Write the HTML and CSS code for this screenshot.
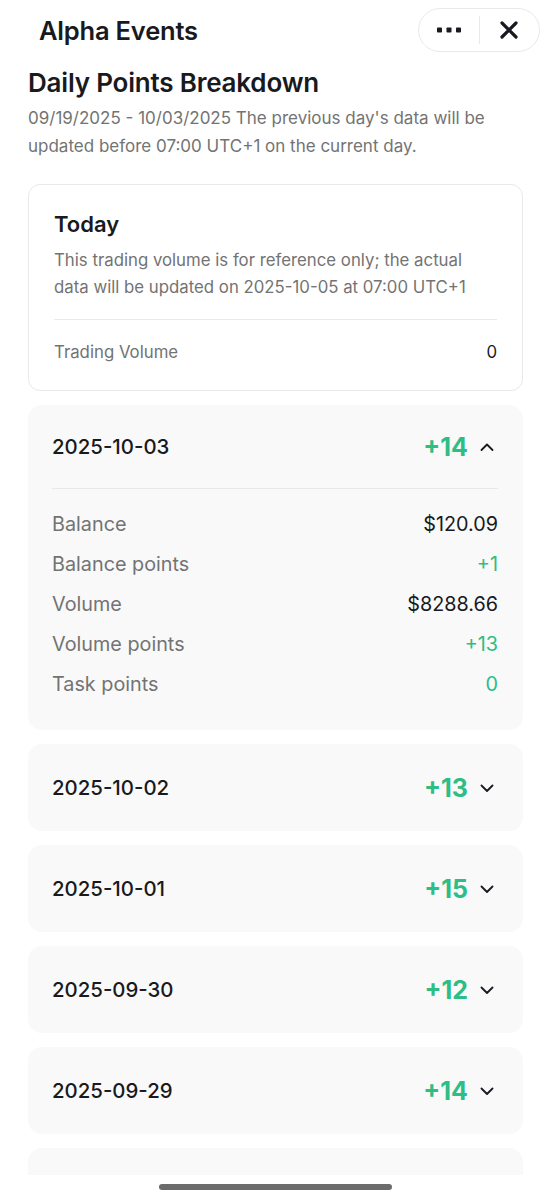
FILE: index.html
```html
<!DOCTYPE html>
<html lang="en">
<head>
  <meta charset="UTF-8" />
  <meta name="viewport" content="width=device-width, initial-scale=1.0" />
  <title>Alpha Events</title>
  <link rel="stylesheet" href="styles.css">
</head>
<body>
  <div class="screen">
    <header class="topbar">
      <h1 class="topbar-title">Alpha Events</h1>
      <div class="topbar-actions">
        <button class="action-btn" title="More">
          <svg width="24" height="6" viewBox="0 0 24 6" fill="currentColor"><rect x="0" y="0.5" width="5" height="5" rx="0.8"/><rect x="9.5" y="0.5" width="5" height="5" rx="0.8"/><rect x="19" y="0.5" width="5" height="5" rx="0.8"/></svg>
        </button>
        <span class="action-sep"></span>
        <button class="action-btn" title="Close">
          <svg width="18" height="18" viewBox="0 0 18 18" fill="none" stroke="currentColor" stroke-width="3.2" stroke-linecap="round"><path d="M2 2l14 14M16 2L2 16"/></svg>
        </button>
      </div>
    </header>

    <main class="content">
      <h2 class="page-title">Daily Points Breakdown</h2>
      <p class="page-note">09/19/2025 - 10/03/2025 The previous day's data will be<br>updated before 07:00 UTC+1 on the current day.</p>

      <section class="today-card">
        <h3 class="today-title">Today</h3>
        <p class="today-note">This trading volume is for reference only; the actual<br>data will be updated on 2025-10-05 at 07:00 UTC+1</p>
        <div class="divider today-divider"></div>
        <div class="stat-row today-row">
          <span class="stat-label">Trading Volume</span>
          <span class="stat-value">0</span>
        </div>
      </section>

      <section class="day-card open">
        <div class="day-head">
          <span class="day-date">2025-10-03</span>
          <span class="day-points">+14</span>
          <svg class="chev" width="14" height="8" viewBox="0 0 14 8" fill="none" stroke="currentColor" stroke-width="1.8" stroke-linecap="round" stroke-linejoin="round"><path d="M1.5 7l5.5-5.5L12.5 7"/></svg>
        </div>
        <div class="divider"></div>
        <div class="day-body">
          <div class="stat-row"><span class="stat-label">Balance</span><span class="stat-value">$120.09</span></div>
          <div class="stat-row"><span class="stat-label">Balance points</span><span class="stat-value up">+1</span></div>
          <div class="stat-row"><span class="stat-label">Volume</span><span class="stat-value">$8288.66</span></div>
          <div class="stat-row"><span class="stat-label">Volume points</span><span class="stat-value up">+13</span></div>
          <div class="stat-row"><span class="stat-label">Task points</span><span class="stat-value up">0</span></div>
        </div>
      </section>

      <section class="day-card">
        <div class="day-head">
          <span class="day-date">2025-10-02</span>
          <span class="day-points">+13</span>
          <svg class="chev" width="14" height="8" viewBox="0 0 14 8" fill="none" stroke="currentColor" stroke-width="1.8" stroke-linecap="round" stroke-linejoin="round"><path d="M1.5 1.5L7 7l5.5-5.5"/></svg>
        </div>
      </section>

      <section class="day-card">
        <div class="day-head">
          <span class="day-date">2025-10-01</span>
          <span class="day-points">+15</span>
          <svg class="chev" width="14" height="8" viewBox="0 0 14 8" fill="none" stroke="currentColor" stroke-width="1.8" stroke-linecap="round" stroke-linejoin="round"><path d="M1.5 1.5L7 7l5.5-5.5"/></svg>
        </div>
      </section>

      <section class="day-card">
        <div class="day-head">
          <span class="day-date">2025-09-30</span>
          <span class="day-points">+12</span>
          <svg class="chev" width="14" height="8" viewBox="0 0 14 8" fill="none" stroke="currentColor" stroke-width="1.8" stroke-linecap="round" stroke-linejoin="round"><path d="M1.5 1.5L7 7l5.5-5.5"/></svg>
        </div>
      </section>

      <section class="day-card">
        <div class="day-head">
          <span class="day-date">2025-09-29</span>
          <span class="day-points">+14</span>
          <svg class="chev" width="14" height="8" viewBox="0 0 14 8" fill="none" stroke="currentColor" stroke-width="1.8" stroke-linecap="round" stroke-linejoin="round"><path d="M1.5 1.5L7 7l5.5-5.5"/></svg>
        </div>
      </section>

      <section class="day-card">
        <div class="day-head"></div>
      </section>
    </main>

    <div class="home-bar"><span class="home-indicator"></span></div>
  </div>
</body>
</html>
```

FILE: styles.css
```css
:root {
  --text: #181a20;
  --muted: #737373;
  --green: #2ebd85;
  --line: #e9e9e9;
  --card: #f9f9f9;
}
* { margin: 0; padding: 0; box-sizing: border-box; }
body {
  background: #fff;
  color: var(--text);
  font-family: Inter, 'Noto Sans', sans-serif;
}
.screen {
  height: 1199px;
  display: flex;
  flex-direction: column;
  overflow: hidden;
}

/* top bar */
.topbar {
  height: 60px;
  flex-shrink: 0;
  display: flex;
  align-items: center;
  justify-content: space-between;
  padding: 0 11px 0 39px;
}
.topbar-title {
  font-size: 25.5px;
  font-weight: 600;
  letter-spacing: -0.2px;
}
.topbar-actions {
  width: 122px;
  height: 44px;
  border: 1px solid var(--line);
  border-radius: 22px;
  display: flex;
  align-items: center;
}
.action-btn {
  flex: 1;
  height: 100%;
  background: none;
  border: none;
  color: var(--text);
  display: flex;
  align-items: center;
  justify-content: center;
}
.action-sep {
  width: 1px;
  height: 28px;
  background: var(--line);
}

/* content */
.content {
  flex: 1;
  overflow: hidden;
  padding: 0 28px;
  display: flex;
  flex-direction: column;
  gap: 14px;
}
.page-title {
  font-size: 26px;
  font-weight: 600;
  letter-spacing: -0.2px;
  line-height: 30px;
  margin-top: 8px;
  margin-bottom: -8px;
}
.page-note {
  font-size: 17px;
  line-height: 28px;
  color: var(--muted);
  margin-bottom: 10px;
}

.divider {
  height: 1px;
  background: var(--line);
}

.today-card {
  flex-shrink: 0;
  border: 1px solid var(--line);
  border-radius: 12px;
  padding: 25px 25px 25px;
}
.today-title {
  font-size: 22px;
  font-weight: 600;
  line-height: 28px;
}
.today-note {
  font-size: 16.8px;
  line-height: 27px;
  color: var(--muted);
  margin-top: 9px;
}
.today-divider { margin: 18px 0 19px; }

.stat-row {
  display: flex;
  justify-content: space-between;
  align-items: center;
  height: 40px;
  font-size: 19.8px;
}
.today-row {
  height: 26px;
  font-size: 16.8px;
}
.stat-label { color: var(--muted); }
.stat-value { color: var(--text); }
.stat-value.up { color: var(--green); }

.day-card {
  flex-shrink: 0;
  background: var(--card);
  border-radius: 14px;
  padding: 0 25px 0 24px;
}
.day-head {
  height: 87px;
  display: flex;
  align-items: center;
}
.day-card.open .day-head { height: 83px; }
.day-date {
  flex: 1;
  font-size: 20.4px;
  font-weight: 500;
}
.day-points {
  font-size: 25px;
  font-weight: 700;
  color: var(--green);
}
.chev {
  margin: 0 4px 0 12px;
  color: var(--text);
}
.day-body {
  padding: 15px 0 26px;
}

/* bottom */
.home-bar {
  height: 24px;
  flex-shrink: 0;
  display: flex;
  justify-content: center;
  padding-top: 9px;
}
.home-indicator {
  width: 233px;
  height: 6px;
  border-radius: 3px;
  background: #6b6b6b;
}
```
